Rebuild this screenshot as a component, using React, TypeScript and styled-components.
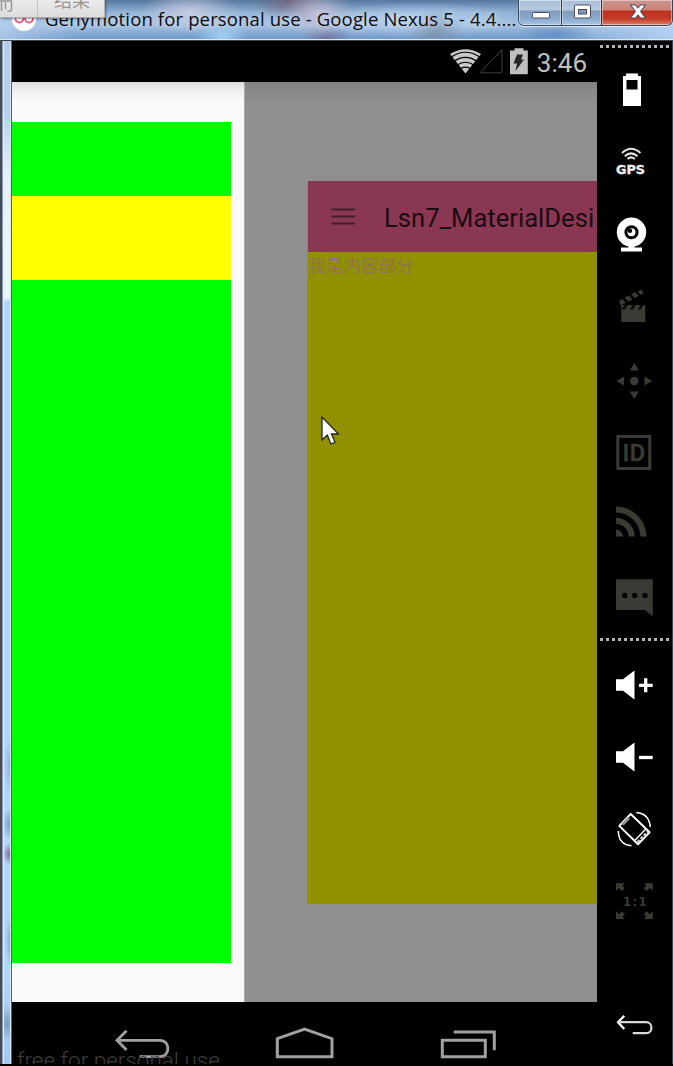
import React from "react";
import styled, { createGlobalStyle } from "styled-components";

const GlobalStyle = createGlobalStyle`
  * { box-sizing: border-box; }
  body { margin: 0; background: #000; }
  svg { display: block; flex: none; }
`;

const Desktop = styled.div`
  position: relative;
  width: 673px;
  height: 1066px;
  overflow: hidden;
  background: #000;
  display: flex;
  flex-direction: column;
`;

const TitleBar = styled.header`
  height: 41px;
  flex: none;
  display: flex;
  justify-content: space-between;
  border-bottom: 1px solid #3c4653;
  box-shadow: inset 0 -1px 0 #dce9f7;
  background:
    radial-gradient(ellipse 26px 14px at 222px 36px, rgba(164, 213, 247, 0.9), transparent),
    radial-gradient(ellipse 50px 22px at 190px 12px, rgba(205, 205, 226, 0.85), transparent),
    radial-gradient(ellipse 36px 24px at 318px 14px, rgba(198, 190, 212, 0.9), transparent),
    radial-gradient(ellipse 26px 14px at 326px 38px, rgba(110, 95, 135, 0.6), transparent),
    radial-gradient(ellipse 40px 18px at 290px 2px, rgba(120, 95, 115, 0.7), transparent),
    radial-gradient(ellipse 30px 26px at 436px 34px, rgba(120, 142, 170, 0.8), transparent),
    radial-gradient(ellipse 100px 18px at 420px 20px, rgba(190, 214, 240, 0.8), transparent),
    radial-gradient(ellipse 40px 12px at 556px 34px, rgba(90, 135, 190, 0.7), transparent),
    linear-gradient(90deg, rgba(184, 208, 238, 0.75), transparent 12%, transparent 80%, rgba(184, 210, 243, 0.9)),
    linear-gradient(180deg, #55789f 0, #8fb0d4 12px, #a3c0e0 25px, #6f9aca 39px);
`;

const AppTitle = styled.div`
  display: flex;
  align-items: center;
  gap: 9px;
  height: 38px;
  padding-left: 12px;
`;

const TitleText = styled.span`
  font: 18.5px/26px "Open Sans", "Noto Sans", sans-serif;
  letter-spacing: 0.145px;
  margin-top: -1px;
  white-space: nowrap;
  color: #0b0c10;
  text-shadow: 0 0 7px rgba(255, 255, 255, 0.7);
`;

const WindowButtons = styled.div`
  display: flex;
  width: 155px;
  flex: none;
  height: 26px;
  overflow: hidden;
  border: 1px solid #36475d;
  border-top: 0;
  border-radius: 0 0 6px 6px;
  box-shadow: 0 1px 1px rgba(255, 255, 255, 0.7);
`;

const WindowButton = styled.div<{ $width: number; $close?: boolean }>`
  width: ${(p) => p.$width}px;
  display: flex;
  justify-content: center;
  box-shadow: inset 0 0 0 1px rgba(255, 255, 255, 0.45);
  & + & { border-left: 1px solid ${(p) => (p.$close ? "#472733" : "#42556d")}; }
  background: ${(p) =>
    p.$close
      ? "linear-gradient(#c99590 0, #cf8277 10px, #bb2f1c 11px, #c53d27 19px, #df8873 26px)"
      : "linear-gradient(#a8bfd8 0, #b5c8dc 10px, #7f9cbd 11px, #8babcd 19px, #aecaea 26px)"};
`;

const Body = styled.main`
  flex: none;
  height: 1023px;
  display: flex;
`;

const LeftFrame = styled.div`
  width: 12px;
  flex: none;
  border-left: 2px solid #454b58;
  border-right: 1px solid #4f6470;
  box-shadow: inset 1px 0 0 #8b9db0, inset 2px 0 0 #e0effd, inset -1px 0 0 #d9e8f5;
  background:
    radial-gradient(ellipse 5px 28px at 7px 725px, rgba(130, 170, 210, 0.7), transparent),
    radial-gradient(ellipse 6px 16px at 7px 783px, rgba(110, 145, 180, 0.8), transparent),
    radial-gradient(ellipse 6px 11px at 7px 813px, rgba(120, 80, 140, 0.8), transparent),
    radial-gradient(ellipse 5px 26px at 8px 900px, rgba(120, 155, 190, 0.7), transparent),
    radial-gradient(ellipse 8px 18px at 5px 982px, rgba(110, 145, 178, 0.8), transparent),
    linear-gradient(#b4cdea 0, #b4d0ee 70px, #e6f0fb 135px, #eef4fb 257px, #b4d6fa 260px, #b4d6fa 930px, #a6c7f0 1023px);
`;

const Screen = styled.section`
  width: 585px;
  flex: none;
  display: flex;
  flex-direction: column;
`;

const StatusBar = styled.div`
  height: 41px;
  flex: none;
  display: flex;
  justify-content: flex-end;
  padding-right: 10px;
  background: #000;
`;

const Clock = styled.span`
  font: 26px/44px Roboto, sans-serif;
  color: #c0c0c0;
`;

const AppArea = styled.div`
  height: 920px;
  flex: none;
  display: flex;
`;

const Drawer = styled.div`
  width: 232px;
  padding: 40px 13px 39px 0;
  background: linear-gradient(#dedede 0, #f0f0f0 9px, #fafafa 20px);
`;

const DrawerFill = styled.div`
  height: 841px;
  padding-top: 74px;
  background: #00ff00;
`;

const DrawerItem = styled.div`
  height: 84px;
  background: #ffff00;
`;

const Scrim = styled.div`
  width: 353px;
  padding: 99px 1px 0 62px;
  border-left: 1px solid #aaa;
  background: linear-gradient(#828282 0, #8e8e8e 18px, #8f8f8f 24px);
`;

const Page = styled.div`
  height: 723px;
  margin-right: -1px;
  overflow: hidden;
  background: #919100;
  border-left: 1px solid #908f40;
`;

const AppBar = styled.div`
  height: 71px;
  display: flex;
  align-items: center;
  background: #893752;
`;

const AppBarTitle = styled.span`
  margin-left: 28px;
  padding-top: 3px;
  font: 25.6px/34px Roboto, sans-serif;
  white-space: nowrap;
  color: #1c0b11;
`;

const PageText = styled.div`
  font: 17.6px/26px "Noto Sans CJK SC", sans-serif;
  color: #927252;
`;

const NavBar = styled.nav`
  position: relative;
  height: 62px;
  flex: none;
  display: flex;
  overflow: hidden;
  padding-left: 48px;
  background: #000;
`;

const Watermark = styled.span`
  position: absolute;
  left: 5px;
  top: 44px;
  font: 300 22.5px/28px Roboto, sans-serif;
  white-space: nowrap;
  color: #3d3d3d;
`;

const Toolbar = styled.aside`
  width: 76px;
  flex: none;
  display: flex;
  flex-direction: column;
  padding-top: 4px;
  background: #000;
  border-right: 1px solid #3b4554;
`;

const Dots = styled.div<{ $before?: number; $after: number }>`
  width: 70px;
  height: 3px;
  flex: none;
  margin: ${(p) => p.$before ?? 0}px 0 ${(p) => p.$after}px 3px;
  background: repeating-linear-gradient(90deg, #b5b5b5 0 3px, transparent 3px 6px);
`;

const Spacer = styled.div`
  flex: 1;
`;

const ToolSvg = styled.svg`
  width: 76px;
  height: 72.4px;
`;

const TabPanel = styled.div`
  position: absolute;
  left: 0;
  top: 0;
  width: 105px;
  height: 18px;
  display: flex;
  overflow: hidden;
  background: linear-gradient(#ececec, #dcdcdc);
  border-right: 1px solid #b5b5b5;
  border-bottom: 1px solid #aaa;
  box-shadow: 1px 1px 2px rgba(0, 0, 0, 0.4);
`;

const TabCell = styled.div`
  width: 38px;
  border-right: 1px solid #c4c4c4;
`;

const TabLabel = styled.span`
  margin: -14px 0 0 16px;
  font: 18px/26px "Noto Sans CJK SC", sans-serif;
  color: #979797;
`;

const Pointer = styled.svg`
  position: absolute;
  left: 320px;
  top: 415px;
`;

const DIM = "#3b3b36";

function Tool({ children }: { children: React.ReactNode }) {
  return <ToolSvg viewBox="0 0 76 72.4">{children}</ToolSvg>;
}

function Speaker({ y }: { y: number }) {
  return <path transform={`translate(0 ${y})`} fill="#fff" d="M19 -5.7H26L37.5 -14.5V14.5L26 5.7H19Z" />;
}

function CornerArrow({ transform }: { transform?: string }) {
  return <path transform={transform} d="M19 17.2H27.5L25.5 19.7 27.9 22.3 25 25 22 22 19 24.8Z" />;
}

export default function App() {
  return (
    <Desktop>
      <GlobalStyle />
      <TitleBar>
        <AppTitle>
          <svg width="24" height="24" viewBox="0 0 24 24">
            <circle cx="12" cy="12" r="12" fill="#fff" />
            <g fill="none" stroke="#e8537b" strokeWidth="1.8">
              <circle cx="7.4" cy="11.5" r="4" />
              <circle cx="17" cy="11.5" r="4" />
            </g>
          </svg>
          <TitleText>Genymotion for personal use - Google Nexus 5 - 4.4....</TitleText>
        </AppTitle>
        <WindowButtons>
          <WindowButton $width={42}>
            <svg width="42" height="26"><rect x="13.5" y="12.5" width="17" height="5.5" rx="1" fill="#fff" stroke="#4b4e60" /></svg>
          </WindowButton>
          <WindowButton $width={40}>
            <svg width="40" height="26">
              <rect x="12.5" y="5" width="16" height="13" rx="1" fill="#fff" stroke="#4b4e60" />
              <rect x="16.5" y="9.5" width="8" height="4.5" fill="#7c97b8" stroke="#4b4e60" />
            </svg>
          </WindowButton>
          <WindowButton $width={71} $close>
            <svg width="71" height="26">
              <path d="M28.5 5h5l2.5 3 2.5-3h5l-5 6.5 5 6.5h-5l-2.5-3-2.5 3h-5l5-6.5Z" fill="#fff" stroke="#574a5a" strokeWidth="1.1" strokeLinejoin="round" />
            </svg>
          </WindowButton>
        </WindowButtons>
      </TitleBar>

      <Body>
        <LeftFrame />
        <Screen>
          <StatusBar>
            <svg width="88" height="41" viewBox="448.5 41 88 41">
              <path d="M465 73.5 449.5 54Q465 44.5 480.5 54Z" fill="#c8c8c8" />
              <g fill="none" stroke="#000" strokeWidth="1.2">
                <path d="M450 57.5Q465 47 480 57.5" />
                <path d="M453 61.7Q465 53 477 61.7" />
                <path d="M456 65.5Q465 59 474 65.5" />
                <path d="M459 69.2Q465 65 471 69.2" />
              </g>
              <path d="M479.5 72.8H501.5V49.5Z" fill="none" stroke="#3c3c3c" />
              <path d="M509.5 50.5h4.5v-2.2h9v2.2h4.3v23.8h-17.8Z" fill="#c0c0c0" />
              <path d="M516.5 54.5h6l-2 5h3l-8.5 11.5 1.5-7.5h-3.500Z" fill="#252525" />
            </svg>
            <Clock>3:46</Clock>
          </StatusBar>
          <AppArea>
            <Drawer>
              <DrawerFill><DrawerItem /></DrawerFill>
            </Drawer>
            <Scrim>
              <Page>
                <AppBar>
                  <svg width="48" height="71">
                    <path d="M23.5 28.5H47M23.5 35.5H47M23.5 42.5H47" stroke="#491e2c" strokeWidth="2" />
                  </svg>
                  <AppBarTitle>Lsn7_MaterialDesi</AppBarTitle>
                </AppBar>
                <PageText>我是内容部分</PageText>
              </Page>
            </Scrim>
          </AppArea>
          <NavBar>
            <Watermark>free for personal use</Watermark>
            <svg width="163" height="62" fill="none" stroke="#a0a0a0" strokeWidth="2.8">
              <path d="M66.500 28.700 57 38.300 66.500 48M57 38.300H100C110.500 38.300 110.500 54.700 100 54.700H79.500" />
            </svg>
            <svg width="163" height="62" fill="none" stroke="#a0a0a0" strokeWidth="3">
              <path d="M54.300 36.700 81.600 27 109 36.700V54.700H54.300Z" />
            </svg>
            <svg width="163" height="62" fill="none" stroke="#a0a0a0" strokeWidth="3">
              <path d="M56.300 38.200H99.300V54.700H56.300ZM67.700 30H108.300V48.300" />
            </svg>
          </NavBar>
        </Screen>

        <Toolbar>
          <Dots $after={6} />
          <Tool>
            <path fill="#fff" d="M26 22h3v-2.500h12V22h3v30H26Z" />
            <rect x="29.500" y="26" width="11" height="9.500" fill="#000" />
          </Tool>
          <Tool>
            <g fill="none" stroke="#e4e4e4" strokeWidth="2">
              <path d="M25 27Q34 18.500 43.500 27" />
              <path d="M27.800 30.200Q34 24.500 40.500 30.200" />
              <path d="M30.500 33Q34 29.800 37.800 33" />
            </g>
            <text x="19" y="47.700" fill="#ededed" stroke="#ededed" strokeWidth="0.400" fontFamily="DejaVu Sans, sans-serif" fontWeight="700" fontSize="12.500" textLength="29" lengthAdjust="spacingAndGlyphs">GPS</text>
          </Tool>
          <Tool>
            <circle cx="34.500" cy="33.200" r="14.700" fill="#fff" />
            <circle cx="34.500" cy="33.200" r="7" fill="#000" />
            <circle cx="34.500" cy="33.200" r="4" fill="#fff" />
            <circle cx="33" cy="31.700" r="2.200" fill="#000" />
            <path d="M31.500 46.500h6v2H45v4H24v-4h7.500Z" fill="#fff" />
          </Tool>
          <Tool>
            <g fill={DIM}>
              <path d="M24.300 38.500H48.300V51H24.300Z" />
              <path d="M24.300 34h3.500l-3.500 5ZM31 34h5l-3.500 5h-5ZM38.800 34h5l-3.500 5h-5ZM46.500 34h1.800v5H43Z" />
              <path d="M22.500 29.500l2.500-1.500 4 3.800-5.500 2.700ZM27.500 26.800l4.200-2.300 3.800 3.900-4 2ZM34 23.300l4.200-2 3.800 3.500-4.200 2.200ZM40.700 20.100l4-1.300 2 3.400-3 1.700Z" />
            </g>
          </Tool>
          <Tool>
            <g fill={DIM}>
              <circle cx="37.300" cy="37" r="4.200" />
              <path d="M37.300 19l4.500 7.500h-9ZM37.300 55l4.500-7.500h-9ZM19.500 37l7.500-4.500v9ZM55 37l-7.500-4.500v9Z" />
            </g>
          </Tool>
          <Tool>
            <rect x="20.800" y="20.500" width="32" height="32" fill="none" stroke={DIM} strokeWidth="3" />
            <text x="25.500" y="45" fill={DIM} stroke={DIM} strokeWidth="0.500" fontFamily="Roboto, sans-serif" fontWeight="500" fontSize="23.500" textLength="22.500">ID</text>
          </Tool>
          <Tool>
            <g fill="none" stroke={DIM} strokeWidth="6">
              <path d="M19 21.500A27.300 27.300 0 0 1 46.300 48.600" />
              <path d="M19 33A15.700 15.700 0 0 1 34.700 48.600" />
            </g>
            <path d="M19 41.600A7 7 0 0 1 26 48.600H19Z" fill={DIM} />
          </Tool>
          <Tool>
            <path d="M19 18.200H55.700V55.200L48 48.900H19Z" fill={DIM} />
            <circle cx="27.700" cy="34.500" r="2.700" />
            <circle cx="37.700" cy="34.500" r="2.700" />
            <circle cx="48" cy="34.500" r="2.700" />
          </Tool>
          <Dots $before={5} $after={8} />
          <Tool>
            <Speaker y={36} />
            <path d="M42 36.300H55.700M48.700 29.300V43.300" stroke="#fff" strokeWidth="3.300" />
          </Tool>
          <Tool>
            <Speaker y={35} />
            <path d="M42 35.500H55.700" stroke="#fff" strokeWidth="3.300" />
          </Tool>
          <Tool>
            <g fill="none" stroke="#fff" strokeWidth="2" strokeLinejoin="round">
              <path d="M33.700 20 22.300 31.900 41 50.300 52.600 38.200Z" />
              <path d="M25.500 30.500 32 23.700" stroke="#999" strokeWidth="3" />
              <path d="M37.500 46.800 49 34.800" strokeWidth="1.500" />
              <path d="M40.500 48.200 51 37.500" stroke="#ccc" strokeWidth="2.500" strokeDasharray="3 1.500" />
              <path d="M39.300 18.500Q52 19.500 53.300 33M21.300 37Q21.500 50.500 34.500 51.700" strokeWidth="1.500" />
            </g>
          </Tool>
          <Tool>
            <g fill={DIM}>
              <CornerArrow />
              <CornerArrow transform="translate(74.7 0) scale(-1 1)" />
              <CornerArrow transform="translate(0 70.3) scale(1 -1)" />
              <CornerArrow transform="translate(74.7 70.3) scale(-1 -1)" />
              <text x="26" y="39.800" fontFamily="DejaVu Sans, sans-serif" fontWeight="700" fontSize="11.500" textLength="23.500">1:1</text>
            </g>
          </Tool>
          <Spacer />
          <Tool>
            <g fill="none" stroke="#d8d8d8" strokeWidth="2.200">
              <path d="M27.300 26.700 21 33.200 27.300 40" stroke="#fff" />
              <path d="M21 33.200H49C56.300 33.200 56.300 44.200 49 44.200H35.700" />
            </g>
          </Tool>
          <div style={{ height: 3 }} />
        </Toolbar>
      </Body>

      <TabPanel>
        <TabCell>
          <svg width="14" height="14" fill="none" stroke="#999" strokeWidth="1.5">
            <path d="M0 1H11.500V9.500Q11.500 11 10 11H7.500M1.500 1V11M5.500 1V9" />
          </svg>
        </TabCell>
        <TabLabel>结果</TabLabel>
      </TabPanel>

      <Pointer width="22" height="32" viewBox="0 0 22 32">
        <path d="M2 2V25L7.300 20.200 11 29 15 27.300 11.500 19H18.500Z" fill="#fff" stroke="#222" strokeWidth="1.300" />
      </Pointer>
    </Desktop>
  );
}
